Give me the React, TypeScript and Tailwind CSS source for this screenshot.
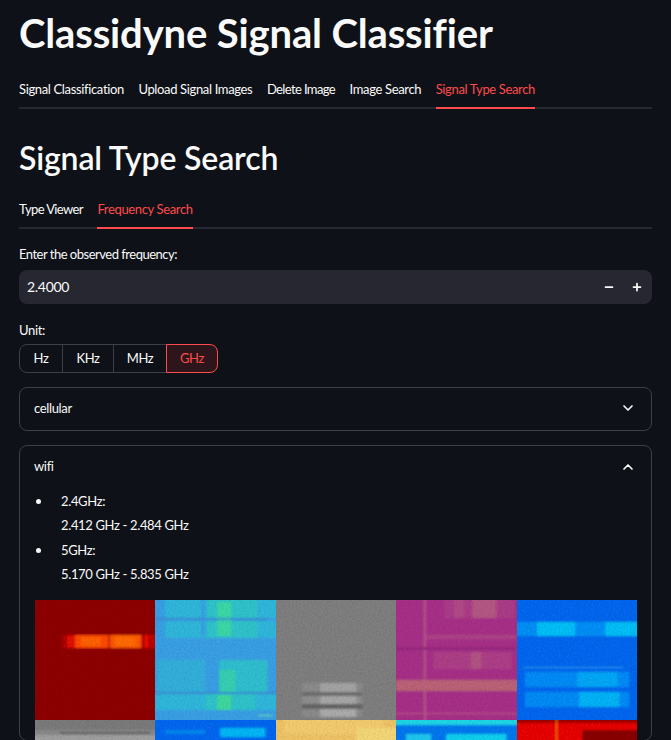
import { ChevronDown, ChevronUp, Minus, Plus } from 'lucide-react';

const RED = 'text-[#ff4b4b]';
const BODY = 'text-[13px] tracking-[-0.35px]';

function Tabs({ items, active }: { items: string[]; active: string }) {
  return (
    <div className="flex gap-[14.5px] border-b-2 border-[#262730]">
      {items.map((t) => (
        <div
          key={t}
          className={`-mb-[2px] shrink-0 whitespace-nowrap border-b-2 pb-[8px] text-[13px] leading-[20px] ${
            t === 'Delete Image' || t === 'Type Viewer' ? 'tracking-[-0.62px]' : 'tracking-[-0.35px]'
          } ${t === active ? `border-[#ff4b4b] ${RED}` : 'border-transparent text-[#fafafa]'}`}
        >
          {t}
        </div>
      ))}
    </div>
  );
}

function Grain() {
  return (
    <filter id="grain" x="-10%" y="-10%" width="120%" height="120%">
      <feGaussianBlur in="SourceGraphic" stdDeviation="1" result="soft" />
      <feTurbulence type="fractalNoise" baseFrequency="0.55" numOctaves="2" seed="4" />
      <feColorMatrix values="0 0 0 0 0  0 0 0 0 0  0 0 0 0 0  0 0 0 0.35 -0.12" />
      <feComposite in2="soft" operator="in" result="dots" />
      <feMerge>
        <feMergeNode in="soft" />
        <feMergeNode in="dots" />
      </feMerge>
    </filter>
  );
}

type Band = [number, number, number, number, string];

function Spectrogram({ base, bands, height }: { base: string; bands: Band[]; height: number }) {
  return (
    <svg
      viewBox={`0 0 120 ${height}`}
      preserveAspectRatio="none"
      className={`block w-full ${height === 120 ? 'h-[120px]' : 'h-[20px]'}`}
    >
      <g filter="url(#grain)">
        <rect x="-8" y="-8" width="136" height={height + 16} fill={base} />
        {bands.map(([x, y, w, h, fill], i) => (
          <rect key={i} x={x} y={y} width={w} height={h} fill={fill} />
        ))}
      </g>
    </svg>
  );
}

const row1: { base: string; bands: Band[] }[] = [
  {
    base: '#8f0000',
    bands: [
      [27, 35, 5, 13, '#b00a00'],
      [32, 35, 8, 13, '#e01500'],
      [40, 35, 33, 13, '#ff4a08'],
      [46, 37, 20, 9, '#ff6208'],
      [73, 35, 2, 13, '#d42a00'],
      [75, 35, 31, 13, '#ff5a0a'],
      [80, 37, 20, 9, '#ff6c0c'],
      [106, 35, 3, 13, '#c01000'],
      [109, 35, 4, 13, '#e81800'],
      [113, 35, 12, 13, '#c00c00'],
    ],
  },
  {
    base: '#3aa0e6',
    bands: [
      [10, -4, 115, 22, '#30b8dc'],
      [10, 21, 115, 17, '#30b8dc'],
      [52, -4, 50, 22, '#30c4cc'],
      [52, 21, 50, 17, '#30c4cc'],
      [62, 2, 14, 34, '#3cd8a8'],
      [46, -4, 4, 40, '#3aa0e6'],
      [2, 60, 48, 32, '#34b0dc'],
      [64, 60, 48, 32, '#32c0d0'],
      [64, 70, 16, 22, '#38d0b4'],
      [0, 94, 125, 16, '#30b8dc'],
      [50, 94, 50, 16, '#30c4cc'],
      [62, 95, 14, 15, '#42d8a0'],
      [0, 18, 112, 2, '#3a8cd8'],
      [0, 92, 125, 2, '#3a8cd8'],
      [103, 115, 14, 1, '#6fe08a'],
    ],
  },
  {
    base: '#808080',
    bands: [
      [26, 83, 60, 9, '#8c8c8c'],
      [44, 83, 36, 9, '#a4a4a4'],
      [26, 96, 60, 8, '#909090'],
      [44, 96, 36, 8, '#a8a8a8'],
      [26, 109, 60, 8, '#8c8c8c'],
      [44, 109, 36, 8, '#acacac'],
      [26, 92, 60, 4, '#6e6e6e'],
      [26, 104, 60, 5, '#666666'],
    ],
  },
  {
    base: '#a83088',
    bands: [
      [48, -4, 70, 22, '#ac3c88'],
      [58, -4, 10, 22, '#b24c88'],
      [76, -4, 24, 22, '#b45884'],
      [0, 80, 125, 11, '#bc6478'],
      [37, 52, 78, 17, '#ae4088'],
      [75, 52, 10, 17, '#b45484'],
      [28, -4, 1.5, 130, '#bc6488'],
      [0, 113, 125, 1, '#ba5888'],
      [0, 47, 120, 3, '#982a80'],
      [30, 35, 90, 4, '#b04488'],
    ],
  },
  {
    base: '#0a68f0',
    bands: [
      [-4, 22, 130, 14, '#1090f8'],
      [20, 22, 38, 14, '#10c0f8'],
      [88, 22, 36, 14, '#10c0f8'],
      [8, 72, 104, 15, '#0c8cf8'],
      [60, 72, 40, 15, '#10a8f8'],
      [8, 92, 104, 15, '#0c8cf8'],
      [62, 92, 40, 15, '#10b4f8'],
      [6, 67, 100, 1, '#2a9cf0'],
    ],
  },
];

const row2: { base: string; bands: Band[] }[] = [
  {
    base: '#8a8a8a',
    bands: [
      [-4, -4, 130, 14, '#7c7c7c'],
      [25, 12, 90, 2, '#606060'],
      [-4, 15, 130, 10, '#a0a0a0'],
    ],
  },
  {
    base: '#0a68f0',
    bands: [
      [65, 8, 45, 9, '#10b8f8'],
      [10, 10, 40, 4, '#1088f0'],
    ],
  },
  {
    base: '#f0c468',
    bands: [
      [8, -4, 100, 18, '#f4cc70'],
      [80, 8, 44, 16, '#f4d878'],
    ],
  },
  {
    base: '#0a78f0',
    bands: [
      [-4, -4, 130, 9, '#20d8e8'],
      [10, 14, 25, 10, '#20c8f0'],
      [50, 14, 60, 10, '#18d0f0'],
    ],
  },
  {
    base: '#e80c00',
    bands: [
      [65, 10, 60, 14, '#8a0000'],
      [-4, -4, 130, 7, '#a00000'],
      [39, -4, 1, 30, '#ff8030'],
    ],
  },
];

function Bullet({ head, range }: { head: string; range: string }) {
  return (
    <div className="flex">
      <span className="ml-[1px] mr-[20px] mt-[9px] h-[5px] w-[5px] shrink-0 rounded-full bg-[#fafafa]" />
      <div className="leading-[23.5px]">
        {head}
        <br />
        {range}
      </div>
    </div>
  );
}

export default function App() {
  return (
    <div className="h-[740px] w-[671px] overflow-hidden bg-[#0e1117] pl-[19px] pr-[19px] font-['Lato',sans-serif] text-[#fafafa]">
      <svg width="0" height="0" className="absolute">
        <Grain />
      </svg>
      <h1 className="pt-[9px] text-[40px] font-bold leading-[48px] tracking-[-0.15px]">Classidyne Signal Classifier</h1>
      <div className="mt-[22px]">
        <Tabs
          items={['Signal Classification', 'Upload Signal Images', 'Delete Image', 'Image Search', 'Signal Type Search']}
          active="Signal Type Search"
        />
      </div>
      <h2 className="mt-[29px] text-[32px] font-semibold leading-[40px] tracking-[-0.15px]">Signal Type Search</h2>
      <div className="mt-[21px]">
        <Tabs items={['Type Viewer', 'Frequency Search']} active="Frequency Search" />
      </div>

      <div className="mt-[15px] text-[13px] leading-[20px] tracking-[-0.5px]">Enter the observed frequency:</div>
      <div className="mt-[6px] flex h-[34px] items-center rounded-lg bg-[#262730] pl-[8px] pr-[9px]">
        <span className="-mt-[1px] flex-1 text-[14px] tracking-[-0.3px]">2.4000</span>
        <Minus size={12} strokeWidth={3.5} className="mr-[16.5px]" />
        <Plus size={12} strokeWidth={3.5} />
      </div>

      <div className={`mt-[16px] leading-[20px] ${BODY}`}>Unit:</div>
      <div className={`mt-[4px] flex h-[29px] ${BODY}`}>
        <div className="flex w-[44px] items-center justify-center rounded-l-lg border border-[#3d3f47]">Hz</div>
        <div className="-ml-px flex w-[52px] items-center justify-center border border-[#3d3f47]">KHz</div>
        <div className="-ml-px flex w-[54px] items-center justify-center border border-[#3d3f47]">MHz</div>
        <div className={`-ml-px flex w-[52px] items-center justify-center rounded-r-lg border border-[#ff4b4b] bg-[#2c161b] ${RED}`}>
          GHz
        </div>
      </div>

      <div className={`mt-[14px] flex h-[44px] items-center justify-between rounded-lg border border-[#3d3f47] pl-[14px] pr-[15px] ${BODY}`}>
        <span>cellular</span>
        <ChevronDown size={16} strokeWidth={2.5} className="-mt-[2px]" />
      </div>

      <div className={`mt-[14px] rounded-lg border border-[#3d3f47] pl-[15px] pr-[15px] ${BODY}`}>
        <div className="-ml-[1px] flex h-[43px] items-center justify-between">
          <span className="-mt-[1px]">wifi</span>
          <ChevronUp size={16} strokeWidth={2.5} className="-mt-[2px]" />
        </div>
        <div className="mt-[1px] flex flex-col gap-[2px]">
          <Bullet head="2.4GHz:" range="2.412 GHz - 2.484 GHz" />
          <Bullet head="5GHz:" range="5.170 GHz - 5.835 GHz" />
        </div>
        <div className="-mr-[1px] mt-[14px] grid grid-cols-5">
          {row1.map((s, i) => (
            <Spectrogram key={i} {...s} height={120} />
          ))}
          {row2.map((s, i) => (
            <Spectrogram key={i} {...s} height={20} />
          ))}
        </div>
      </div>
    </div>
  );
}
